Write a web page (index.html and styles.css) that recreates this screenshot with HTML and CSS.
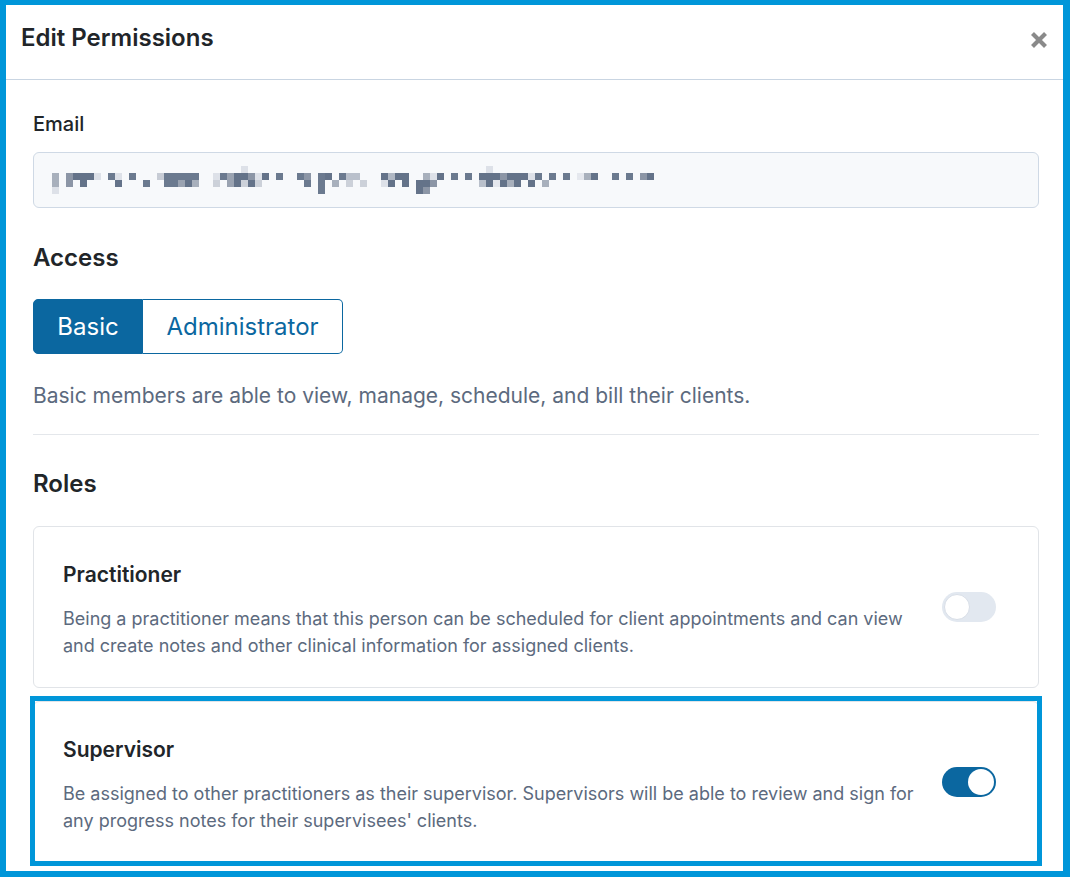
FILE: index.html
```html
<!DOCTYPE html>
<html lang="en">
<head>
<meta charset="utf-8">
<title>Edit Permissions</title>
<link rel="stylesheet" href="styles.css">
</head>
<body>
<div class="modal">
  <div class="modal-header">
    <h1 class="modal-title">Edit Permissions</h1>
    <button class="close-btn" aria-label="Close">
      <svg width="18" height="18" viewBox="0 0 18 18"><path d="M2.5 2.5 L15.5 15.5 M15.5 2.5 L2.5 15.5" stroke="#8a8a8a" stroke-width="4.2" stroke-linecap="butt"/></svg>
    </button>
  </div>
  <div class="modal-body">
    <label class="field-label">Email</label>
    <div class="email-input">
      <svg class="pixel-email" width="620" height="28" viewBox="0 0 620 28">
        <g fill="#647389">
          <rect x="196" y="0" width="7" height="7" fill="#dde1e8"/>
          <rect x="441" y="0" width="7" height="7" fill="#dde1e8"/>
          <rect x="7" y="7" width="7" height="7" fill="#a8b0bc"/>
          <rect x="21" y="7" width="7" height="7" fill="#8c96a6"/>
          <rect x="28" y="7" width="21" height="7"/>
          <rect x="49" y="7" width="7" height="7" fill="#dde1e8"/>
          <rect x="63" y="7" width="7" height="7" fill="#6b7a8f"/>
          <rect x="70" y="7" width="7" height="7" fill="#dde1e8"/>
          <rect x="84" y="7" width="7" height="7" fill="#6b7a8f"/>
          <rect x="112" y="7" width="7" height="7" fill="#c7ccd5"/>
          <rect x="119" y="7" width="35" height="7" fill="#6b7a8f"/>
          <rect x="168" y="7" width="7" height="7" fill="#dde1e8"/>
          <rect x="175" y="7" width="7" height="7" fill="#6b7a8f"/>
          <rect x="182" y="7" width="7" height="7" fill="#9aa3b1"/>
          <rect x="189" y="7" width="14" height="7"/>
          <rect x="203" y="7" width="7" height="7" fill="#8c96a6"/>
          <rect x="210" y="7" width="7" height="7" fill="#dde1e8"/>
          <rect x="217" y="7" width="7" height="7"/>
          <rect x="231" y="7" width="7" height="7" fill="#6b7a8f"/>
          <rect x="252" y="7" width="7" height="7" fill="#6b7a8f"/>
          <rect x="259" y="7" width="7" height="7" fill="#8c96a6"/>
          <rect x="273" y="7" width="7" height="7" fill="#6b7a8f"/>
          <rect x="280" y="7" width="7" height="7"/>
          <rect x="294" y="7" width="7" height="7" fill="#6b7a8f"/>
          <rect x="301" y="7" width="14" height="7" fill="#b9c0cb"/>
          <rect x="336" y="7" width="7" height="7"/>
          <rect x="343" y="7" width="7" height="7" fill="#b0b8c4"/>
          <rect x="350" y="7" width="14" height="7"/>
          <rect x="378" y="7" width="7" height="7" fill="#a8b0bc"/>
          <rect x="385" y="7" width="7" height="7" fill="#dde1e8"/>
          <rect x="392" y="7" width="7" height="7"/>
          <rect x="406" y="7" width="7" height="7" fill="#6b7a8f"/>
          <rect x="420" y="7" width="7" height="7" fill="#6b7a8f"/>
          <rect x="434" y="7" width="21" height="7"/>
          <rect x="455" y="7" width="7" height="7" fill="#8c96a6"/>
          <rect x="462" y="7" width="21" height="7"/>
          <rect x="483" y="7" width="7" height="7" fill="#dde1e8"/>
          <rect x="490" y="7" width="7" height="7" fill="#6b7a8f"/>
          <rect x="504" y="7" width="7" height="7" fill="#6b7a8f"/>
          <rect x="518" y="7" width="7" height="7" fill="#6b7a8f"/>
          <rect x="532" y="7" width="7" height="7" fill="#e5e8ee"/>
          <rect x="539" y="7" width="7" height="7" fill="#a8b0bc"/>
          <rect x="546" y="7" width="7" height="7"/>
          <rect x="567" y="7" width="7" height="7" fill="#6b7a8f"/>
          <rect x="581" y="7" width="7" height="7" fill="#6b7a8f"/>
          <rect x="595" y="7" width="7" height="7" fill="#8c96a6"/>
          <rect x="602" y="7" width="7" height="7"/>
          <rect x="7" y="14" width="7" height="7" fill="#a8b0bc"/>
          <rect x="21" y="14" width="7" height="7" fill="#8c96a6"/>
          <rect x="35" y="14" width="7" height="7"/>
          <rect x="70" y="14" width="7" height="7"/>
          <rect x="98" y="14" width="7" height="7" fill="#6b7a8f"/>
          <rect x="119" y="14" width="14" height="7" fill="#6b7a8f"/>
          <rect x="133" y="14" width="7" height="7" fill="#9aa3b1"/>
          <rect x="140" y="14" width="7" height="7"/>
          <rect x="147" y="14" width="7" height="7" fill="#a8b0bc"/>
          <rect x="168" y="14" width="7" height="7" fill="#ccd1d9"/>
          <rect x="182" y="14" width="7" height="7" fill="#9aa3b1"/>
          <rect x="189" y="14" width="7" height="7"/>
          <rect x="196" y="14" width="7" height="7" fill="#ccd1d9"/>
          <rect x="203" y="14" width="7" height="7"/>
          <rect x="210" y="14" width="7" height="7" fill="#ccd1d9"/>
          <rect x="259" y="14" width="7" height="7" fill="#6b7a8f"/>
          <rect x="273" y="14" width="7" height="7" fill="#6b7a8f"/>
          <rect x="287" y="14" width="7" height="7" fill="#a8b0bc"/>
          <rect x="301" y="14" width="7" height="7" fill="#ccd1d9"/>
          <rect x="315" y="14" width="7" height="7" fill="#ccd1d9"/>
          <rect x="336" y="14" width="7" height="7" fill="#dde1e8"/>
          <rect x="343" y="14" width="7" height="7"/>
          <rect x="357" y="14" width="7" height="7"/>
          <rect x="371" y="14" width="14" height="7"/>
          <rect x="385" y="14" width="7" height="7" fill="#8c96a6"/>
          <rect x="434" y="14" width="7" height="7" fill="#b9c0cb"/>
          <rect x="441" y="14" width="7" height="7"/>
          <rect x="448" y="14" width="7" height="7" fill="#e5e8ee"/>
          <rect x="455" y="14" width="7" height="7"/>
          <rect x="462" y="14" width="7" height="7" fill="#a8b0bc"/>
          <rect x="469" y="14" width="7" height="7"/>
          <rect x="483" y="14" width="7" height="7"/>
          <rect x="497" y="14" width="7" height="7" fill="#a8b0bc"/>
          <rect x="7" y="21" width="7" height="7" fill="#dde1e8"/>
          <rect x="273" y="21" width="7" height="7" fill="#6b7a8f"/>
          <rect x="371" y="21" width="7" height="7"/>
          <rect x="378" y="21" width="7" height="7" fill="#8c96a6"/>
        </g>
      </svg>
    </div>

    <h2 class="section-title access-title">Access</h2>
    <div class="seg-group">
      <button class="seg seg-active">Basic</button>
      <button class="seg">Administrator</button>
    </div>
    <p class="access-desc">Basic members are able to view, manage, schedule, and bill their clients.</p>

    <hr class="divider">

    <h2 class="section-title roles-title">Roles</h2>

    <div class="role-card">
      <div class="role-text">
        <h3 class="role-name">Practitioner</h3>
        <p class="role-desc">Being a practitioner means that this person can be scheduled for client appointments and can view and create notes and other clinical information for assigned clients.</p>
      </div>
      <span class="toggle"><span class="knob"></span></span>
    </div>

    <div class="role-card role-highlight">
      <div class="role-text">
        <h3 class="role-name">Supervisor</h3>
        <p class="role-desc">Be assigned to other practitioners as their supervisor. Supervisors will be able to review and sign for any progress notes for their supervisees' clients.</p>
      </div>
      <span class="toggle toggle-on"><span class="knob"></span></span>
    </div>
  </div>
</div>
</body>
</html>
```

FILE: styles.css
```css
* { box-sizing: border-box; }

html, body {
  margin: 0;
  padding: 0;
  background: #ffffff;
}

body {
  font-family: Inter, "Noto Sans", "Liberation Sans", sans-serif;
  color: #212529;
}

.modal {
  width: 1070px;
  height: 877px;
  overflow: hidden;
  background: #ffffff;
  border-style: solid;
  border-color: #0096d9;
  border-width: 5px 7px 6px 6px;
}

.modal-header {
  display: flex;
  justify-content: space-between;
  align-items: flex-start;
  padding: 21px 15px 29px 15px;
  border-bottom: 1px solid #c9d5e2;
}

.modal-title {
  margin: 0;
  font-size: 24px;
  line-height: 24px;
  font-weight: 600;
  color: #212529;
}

.close-btn {
  margin-top: 5px;
  padding: 0;
  border: 0;
  background: none;
  width: 18px;
  height: 18px;
  display: block;
}

.close-btn svg { display: block; }

.modal-body {
  padding: 32px 24px 0 27px;
}

.field-label {
  display: block;
  font-size: 20px;
  line-height: 24px;
  font-weight: 500;
  color: #212529;
}

.email-input {
  margin-top: 16px;
  height: 56px;
  border: 1px solid #cfd9e5;
  border-radius: 6px;
  background: #f7f9fb;
  padding: 13px 0 0 11px;
}

.pixel-email { display: block; }

.section-title {
  margin: 0;
  font-size: 24px;
  line-height: 28px;
  font-weight: 600;
  color: #212529;
}

.access-title { margin-top: 36px; }

.seg-group {
  display: flex;
  margin-top: 27px;
  width: 310px;
  height: 55px;
}

.seg {
  font-family: inherit;
  font-size: 24px;
  font-weight: 400;
  padding: 0;
  height: 55px;
  border: 1px solid #0b67a0;
  background: #ffffff;
  color: #0b67a0;
}

.seg-active {
  width: 110px;
  background: #0b67a0;
  color: #ffffff;
  border-radius: 5px 0 0 5px;
}

.seg:not(.seg-active) {
  width: 200px;
  border-left: 0;
  border-radius: 0 5px 5px 0;
}

.access-desc {
  margin: 28px 0 0 0;
  font-size: 21px;
  line-height: 28px;
  color: #5c6a7e;
}

.divider {
  margin: 24px 0 0 0;
  border: 0;
  border-top: 1px solid #e4e7eb;
  height: 0;
}

.roles-title { margin-top: 35px; }

.role-card {
  display: flex;
  align-items: center;
  margin-top: 28px;
  border: 1px solid #e1e4e8;
  border-radius: 6px;
  padding: 36px 42px 28px 29px;
}

.role-card + .role-card { margin-top: 13px; }

.role-highlight {
  position: relative;
}

.role-highlight::after {
  content: "";
  position: absolute;
  top: -6px;
  left: -4px;
  right: -4px;
  bottom: -4px;
  border: 5px solid #0096d9;
  pointer-events: none;
}

.role-text {
  width: 860px;
  flex: none;
}

.role-name {
  margin: 0;
  font-size: 21px;
  line-height: 24px;
  font-weight: 600;
  color: #212529;
}

.role-desc {
  margin: 18px 0 0 0;
  font-size: 18px;
  line-height: 27px;
  color: #5c6a7e;
}

.toggle {
  margin-left: auto;
  margin-top: -8px;
  flex: none;
  position: relative;
  width: 54px;
  height: 30px;
  border-radius: 15px;
  background: #e2e8f0;
}

.knob {
  position: absolute;
  top: 2px;
  left: 2px;
  width: 26px;
  height: 26px;
  border-radius: 50%;
  background: #ffffff;
  border: 1px solid #d8dee7;
}

.toggle-on { background: #0b67a0; }

.toggle-on .knob {
  left: 26px;
  border: 0;
}
```
